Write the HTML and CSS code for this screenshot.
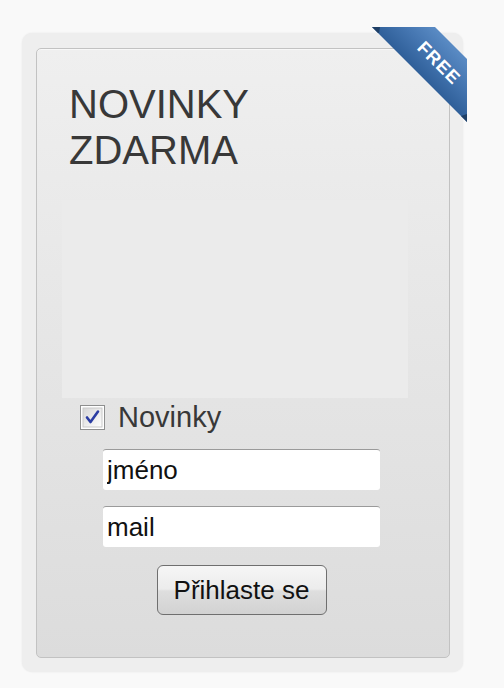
FILE: index.html
```html
<!DOCTYPE html>
<html lang="cs">
<head>
<meta charset="utf-8">
<title>Novinky zdarma</title>
<link rel="stylesheet" href="styles.css">
</head>
<body>
<div class="frame">
  <svg class="ribbon" width="100" height="100" viewBox="0 0 100 100">
    <defs>
      <linearGradient id="rg" gradientUnits="userSpaceOnUse" x1="60" y1="55" x2="91.5" y2="23.5">
        <stop offset="0" stop-color="#2f5f99"/>
        <stop offset="0.55" stop-color="#4677b2"/>
        <stop offset="1" stop-color="#5a8bc4"/>
      </linearGradient>
    </defs>
    <polygon points="5,0 68,0 100,32 100,95" fill="url(#rg)"/>
    <polygon points="5,0 13,0 12,6 11,6" fill="#1f3f66"/>
    <polygon points="100,87 100,95 94,89" fill="#1f3f66"/>
    <text x="72" y="36" class="ribbon-text" transform="rotate(45 72 36)">FREE</text>
  </svg>
  <div class="panel">
    <h1 class="title">NOVINKY<br>ZDARMA</h1>
    <div class="placeholder"></div>
    <label class="check-row">
      <svg class="checkbox" width="25" height="25" viewBox="0 0 25 25">
        <defs>
          <linearGradient id="cb" x1="0" y1="0" x2="1" y2="1">
            <stop offset="0" stop-color="#d6d6d6"/>
            <stop offset="1" stop-color="#ffffff"/>
          </linearGradient>
        </defs>
        <rect x="0.5" y="0.5" width="24" height="24" fill="#fff" stroke="#8e8f8f"/>
        <rect x="3" y="3" width="19" height="19" fill="url(#cb)" stroke="#c9c9c9"/>
        <path d="M7 12.5 L10.5 17 L18 6.5" fill="none" stroke="#2b3da3" stroke-width="2.6" stroke-linejoin="round" stroke-linecap="round"/>
      </svg>
      <span class="check-label">Novinky</span>
    </label>
    <div class="fields">
      <input class="field" type="text" value="jméno">
      <input class="field" type="text" value="mail">
      <button class="btn" type="button">Přihlaste se</button>
    </div>
  </div>
</div>
</body>
</html>
```
FILE: styles.css
```css
html, body {
  margin: 0;
  padding: 0;
}
body {
  background: #f9f9f9;
  font-family: "Liberation Sans", Arial, sans-serif;
  color: #333;
  width: 504px;
  height: 688px;
  overflow: hidden;
}
.frame {
  position: relative;
  box-sizing: border-box;
  margin: 33px 0 0 22px;
  width: 441px;
  height: 639px;
  padding: 15px 13px 14px 14px;
  background: #eeeeee;
  border-radius: 10px;
  box-shadow: 0 0 2px rgba(0, 0, 0, 0.08);
}
.ribbon {
  position: absolute;
  left: 345px;
  top: -6px;
  overflow: visible;
}
.ribbon-text {
  fill: #fff;
  font-family: "Liberation Sans", Arial, sans-serif;
  font-weight: bold;
  font-size: 18px;
  letter-spacing: 1px;
  text-anchor: middle;
  dominant-baseline: central;
}
.panel {
  box-sizing: border-box;
  width: 414px;
  height: 610px;
  border: 1px solid #c2c2c2;
  border-radius: 5px;
  background: linear-gradient(#efefef, #dcdcdc);
  box-shadow: inset 0 1px 0 #f8f8f8;
  padding: 32px 0 0 25px;
  display: flex;
  flex-direction: column;
}
.title {
  margin: 0 0 0 7px;
  font-weight: normal;
  font-size: 40px;
  line-height: 46px;
  color: #383838;
}
.placeholder {
  margin-top: 27px;
  width: 346px;
  height: 198px;
  background: #ebebeb;
}
.check-row {
  display: flex;
  align-items: center;
  gap: 13px;
  margin: 2px 0 0 18px;
  height: 34px;
}
.checkbox {
  display: block;
  flex: none;
}
.check-label {
  font-size: 29px;
  color: #383838;
}
.fields {
  display: flex;
  flex-direction: column;
  align-items: center;
  width: 359px;
  margin-top: 15px;
  gap: 16px;
}
.field {
  box-sizing: border-box;
  width: 277px;
  height: 41px;
  margin: 0;
  border: none;
  border-top: 1px solid #9a9a9a;
  border-radius: 3px;
  background: #fff;
  padding: 0 0 0 4px;
  font-family: "Liberation Sans", Arial, sans-serif;
  font-size: 26px;
  color: #111;
  outline: none;
}
.btn {
  box-sizing: border-box;
  width: 170px;
  height: 50px;
  margin-top: 2px;
  border: 1px solid #6f6f6f;
  border-radius: 6px;
  background: linear-gradient(#f6f6f6, #ececec 48%, #dedede 52%, #d2d2d2);
  font-family: "Liberation Sans", Arial, sans-serif;
  font-size: 26px;
  color: #111;
  padding: 0;
}
```
